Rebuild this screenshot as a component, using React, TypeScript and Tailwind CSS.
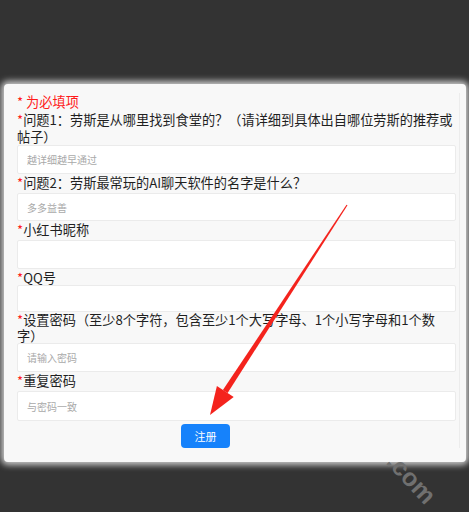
import React from "react";

const font = { fontFamily: '"Noto Sans CJK SC", "Noto Sans", sans-serif' };

function Label({ children, h, lead = "leading-[17px]" }: { children: React.ReactNode; h: string; lead?: string }) {
  return (
    <div className={`${h} ${lead} text-[13.2px] text-[#1f1f1f]`}>
      <span className="text-[#ff1a1a]">*</span>
      {children}
    </div>
  );
}

function Field({ h, placeholder }: { h: string; placeholder?: string }) {
  return (
    <input
      className={`${h} w-full shrink-0 rounded-[2px] border border-[#ebebeb] bg-white px-[9px] text-[10px] text-[#333] outline-none placeholder:text-[#a9a9a9]`}
      placeholder={placeholder}
      style={font}
    />
  );
}

export default function App() {
  const u = { x: -0.546, y: 0.838 };
  const n = { x: 0.838, y: 0.546 };
  const tip = { x: 210, y: 415 };
  const top = { x: 347, y: 205 };
  const base = { x: tip.x - 28 * u.x, y: tip.y - 28 * u.y };
  const pt = (p: { x: number; y: number }) => `${p.x.toFixed(1)},${p.y.toFixed(1)}`;
  const shaft = [
    { x: top.x + 0.6 * n.x, y: top.y + 0.6 * n.y },
    { x: base.x + 2.8 * n.x, y: base.y + 2.8 * n.y },
    { x: base.x - 2.8 * n.x, y: base.y - 2.8 * n.y },
    { x: top.x - 0.6 * n.x, y: top.y - 0.6 * n.y },
  ]
    .map(pt)
    .join(" ");
  const head = [
    tip,
    { x: base.x + 10 * n.x, y: base.y + 10 * n.y },
    { x: base.x - 10 * n.x, y: base.y - 10 * n.y },
  ]
    .map(pt)
    .join(" ");

  return (
    <div className="relative h-[512px] w-[469px] overflow-hidden bg-[#333333]" style={font}>
      <div className="pl-[4px] pr-[3px] pt-[84px]">
        <div className="rounded-[4px] bg-[#f8f8f8] pb-[14px] pl-[13px] pr-[6px] pt-[9px] shadow-[0_0_6px_3px_rgba(255,255,255,0.75)]">
          <div className="flex flex-col border-r border-[#ececec] pr-[3px]">
            <div className="h-[18px] text-[13.2px] leading-[17px] text-[#ff1a1a]">* 为必填项</div>
            <Label h="h-[34px]">
              问题1：劳斯是从哪里找到食堂的？（请详细到具体出自哪位劳斯的推荐或
              <br />
              帖子）
            </Label>
            <Field h="h-[29px]" placeholder="越详细越早通过" />
            <Label h="h-[19px]">问题2：劳斯最常玩的AI聊天软件的名字是什么？</Label>
            <Field h="h-[28px]" placeholder="多多益善" />
            <Label h="h-[19px]">小红书昵称</Label>
            <Field h="h-[29px]" />
            <Label h="h-[16px]">QQ号</Label>
            <Field h="h-[27px]" />
            <Label h="h-[31px]" lead="leading-[15.5px]">
              设置密码（至少8个字符，包含至少1个大写字母、1个小写字母和1个数
              <br />
              字）
            </Label>
            <Field h="h-[29px]" placeholder="请输入密码" />
            <Label h="h-[19px]">重复密码</Label>
            <Field h="h-[30px]" placeholder="与密码一致" />
            <div className="mt-[1px] pl-[164px]">
              <button className="h-[24px] w-[49px] rounded-[4px] bg-[#1682fb] text-[11px] text-white">注册</button>
            </div>
          </div>
        </div>
      </div>

      <div
        className="pointer-events-none absolute left-[382px] top-[460px] rotate-[47deg] text-[25px] font-bold text-[#707070]"
        style={{ fontFamily: '"Liberation Sans", sans-serif' }}
      >
        .com
      </div>

      <svg className="pointer-events-none absolute left-0 top-0" width="469" height="512">
        <polygon points={shaft} fill="#f4231d" />
        <polygon points={head} fill="#f4231d" />
      </svg>
    </div>
  );
}
